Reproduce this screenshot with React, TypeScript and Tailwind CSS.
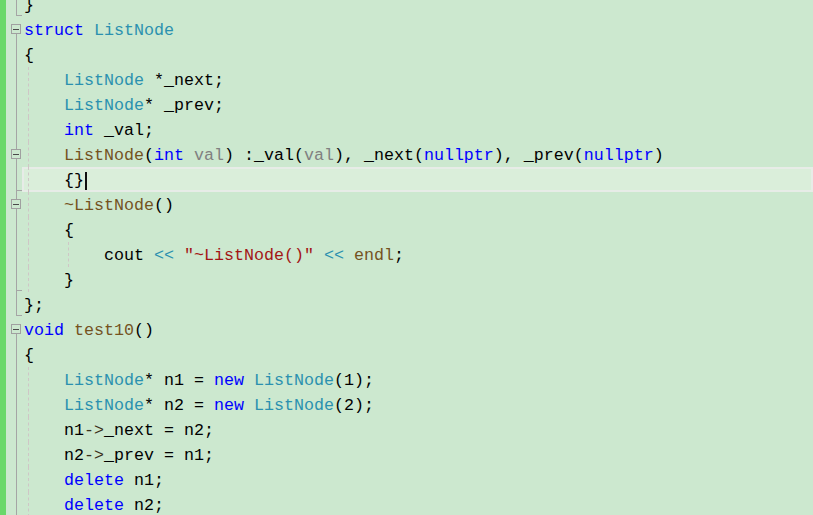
import React from 'react';

type Tok = [string, string];

const K = 'text-[#0000ff]';
const T = 'text-[#2b91af]';
const F = 'text-[#74531f]';
const P = 'text-[#808080]';
const S = 'text-[#a31515]';
const O = 'text-[#2b91af]';
const D = 'text-[#000000]';
const A = 'text-[#3b2f1a]';

type Fold = 'box' | 'boxLine' | 'line' | 'end' | 'endLine';

interface Line {
    toks: Tok[];
    fold: Fold;
    guides: number[];
    current?: boolean;
}

const ind = (n: number): Tok => [D, ' '.repeat(n)];

const lines: Line[] = [
    { toks: [[D, '}']], fold: 'end', guides: [] },
    { toks: [[K, 'struct'], [D, ' '], [T, 'ListNode']], fold: 'box', guides: [] },
    { toks: [[D, '{']], fold: 'line', guides: [] },
    { toks: [ind(4), [T, 'ListNode'], [D, ' *_next;']], fold: 'line', guides: [1] },
    { toks: [ind(4), [T, 'ListNode'], [D, '* _prev;']], fold: 'line', guides: [1] },
    { toks: [ind(4), [K, 'int'], [D, ' _val;']], fold: 'line', guides: [1] },
    {
        toks: [
            ind(4), [F, 'ListNode'], [D, '('], [K, 'int'], [D, ' '], [P, 'val'], [D, ') :_val('], [P, 'val'],
            [D, '), _next('], [K, 'nullptr'], [D, '), _prev('], [K, 'nullptr'], [D, ')'],
        ],
        fold: 'boxLine',
        guides: [1],
    },
    { toks: [ind(4), [D, '{}']], fold: 'endLine', guides: [1], current: true },
    { toks: [ind(4), [F, '~ListNode'], [D, '()']], fold: 'boxLine', guides: [1] },
    { toks: [ind(4), [D, '{']], fold: 'line', guides: [1] },
    {
        toks: [
            ind(8), [D, 'cout'], [D, ' '], [O, '<<'], [D, ' '], [S, '"~ListNode()"'], [D, ' '], [O, '<<'], [D, ' '],
            [F, 'endl'], [D, ';'],
        ],
        fold: 'line',
        guides: [1, 2],
    },
    { toks: [ind(4), [D, '}']], fold: 'endLine', guides: [1] },
    { toks: [[D, '};']], fold: 'end', guides: [] },
    { toks: [[K, 'void'], [D, ' '], [F, 'test10'], [D, '()']], fold: 'box', guides: [] },
    { toks: [[D, '{']], fold: 'line', guides: [] },
    { toks: [ind(4), [T, 'ListNode'], [D, '* n1 = '], [K, 'new'], [D, ' '], [T, 'ListNode'], [D, '(1);']], fold: 'line', guides: [1] },
    { toks: [ind(4), [T, 'ListNode'], [D, '* n2 = '], [K, 'new'], [D, ' '], [T, 'ListNode'], [D, '(2);']], fold: 'line', guides: [1] },
    { toks: [ind(4), [D, 'n1'], [A, '->'], [D, '_next = n2;']], fold: 'line', guides: [1] },
    { toks: [ind(4), [D, 'n2'], [A, '->'], [D, '_prev = n1;']], fold: 'line', guides: [1] },
    { toks: [ind(4), [K, 'delete'], [D, ' n1;']], fold: 'line', guides: [1] },
    { toks: [ind(4), [K, 'delete'], [D, ' n2;']], fold: 'line', guides: [1] },
];

// outlining margin: fold boxes, vertical lines and end ticks
function Gutter({ fold }: { fold: Fold }) {
    if (fold === 'box' || fold === 'boxLine') {
        return (
            <div className="flex h-full w-[16px] shrink-0 flex-col pl-[5px]">
                <div className="flex h-full w-[10px] flex-col items-center">
                    <div className={fold === 'boxLine' ? 'h-[7.5px] w-px bg-[#a5a5a5]' : 'h-[7.5px] w-px'} />
                    <div className="flex h-[10px] w-[10px] shrink-0 items-center justify-center border border-[#a0a0a0] bg-[#cce8cf]">
                        <div className="h-px w-[6px] bg-[#4a4a4a]" />
                    </div>
                    <div className="w-px flex-1 bg-[#a5a5a5]" />
                </div>
            </div>
        );
    }
    return (
        <div className="flex h-full w-[16px] shrink-0 flex-col pl-[10px]">
            {fold === 'line' && <div className="h-full border-l border-[#a5a5a5]" />}
            {fold === 'end' && <div className="h-[24px] w-[6px] border-b border-l border-[#a5a5a5]" />}
            {fold === 'endLine' && (
                <div className="h-full w-[6px] border-l border-[#a5a5a5] pt-[23px]">
                    <div className="h-px bg-[#a5a5a5]" />
                </div>
            )}
        </div>
    );
}

export default function App() {
    return (
        <div className="h-screen w-full overflow-hidden bg-[#cce8cf]">
            <div className="mt-[-8.5px] flex flex-col">
                {lines.map((line, i) => (
                    <div key={i} className="flex h-[25px]">
                        <div className="h-full w-[6px] shrink-0 bg-[#6ad86a]" />
                        <Gutter fold={line.fold} />
                        <div className="relative h-full flex-1 pl-[2px]">
                            {/* current line highlight */}
                            {line.current && (
                                <div className="absolute inset-0 border-2 border-[#e7ece7] bg-[#daeeda]" />
                            )}
                            {/* indent guides */}
                            {line.guides.includes(1) && (
                                <div className="absolute left-[6px] top-0 bottom-0 border-l border-dashed border-[#cfc6c6]" />
                            )}
                            {line.guides.includes(2) && (
                                <div className="absolute left-[46px] top-0 bottom-0 border-l border-dashed border-[#cfc6c6]" />
                            )}
                            <div className="relative flex items-center whitespace-pre pt-[1.5px] font-['Liberation_Mono',monospace] text-[16.67px] leading-[25px]">
                                {line.toks.map(([cls, text], j) => (
                                    <span key={j} className={cls}>
                                        {text}
                                    </span>
                                ))}
                                {line.current && <span className="ml-px inline-block h-[18px] w-[2px] bg-[#101010]" />}
                            </div>
                        </div>
                    </div>
                ))}
            </div>
        </div>
    );
}
